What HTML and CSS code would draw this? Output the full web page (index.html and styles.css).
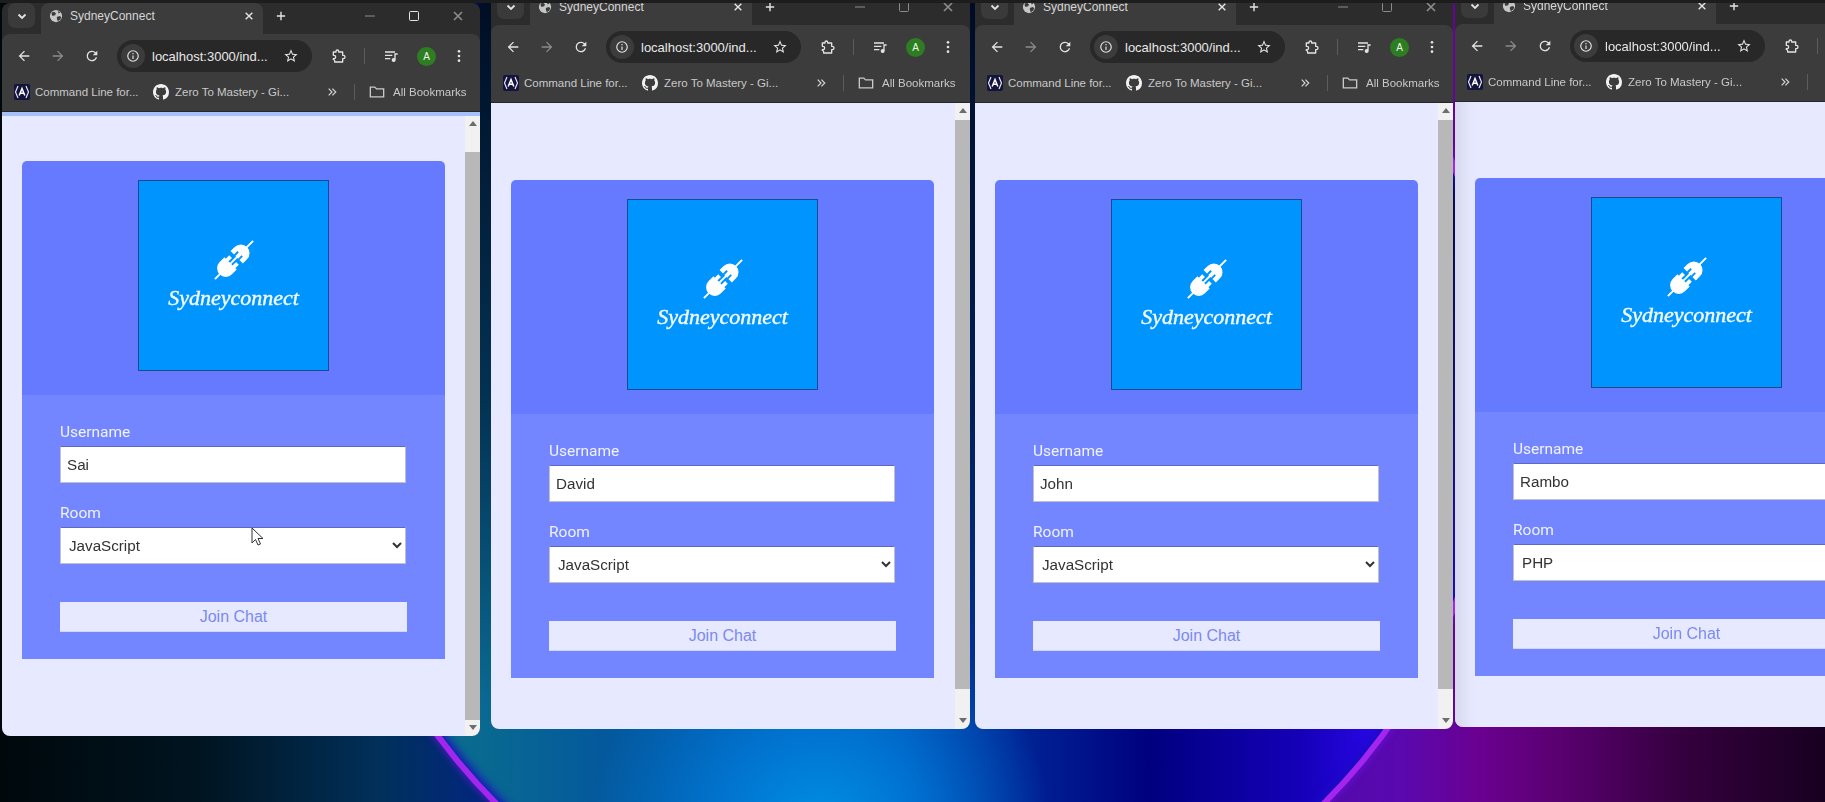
FILE: index.html
```html
<!DOCTYPE html>
<html lang="en">
<head>
    <meta charset="UTF-8">
    <title>SydneyConnect</title>
    <link rel="stylesheet" href="styles.css">
</head>
<body>
    <!-- shared icons -->
    <svg class="sprite" width="0" height="0">
        <symbol id="i-globe" viewBox="0 0 16 16"><circle cx="8" cy="8" r="7" fill="#c4c7c5"/><path d="M3 4l3-1 2 2-1 2-3 1-1-2zM9 9l3-1 2 1-1 3-3 2-1-3zM10 2l3 2-2 1z" fill="#3c3c3c"/></symbol>
        <symbol id="i-down" viewBox="0 0 12 12"><path d="M2.5 4.5L6 8l3.5-3.5" fill="none" stroke="currentColor" stroke-width="1.8"/></symbol>
        <symbol id="i-x" viewBox="0 0 12 12"><path d="M2 2l8 8M10 2l-8 8" fill="none" stroke="currentColor" stroke-width="1.7"/></symbol>
        <symbol id="i-plus" viewBox="0 0 12 12"><path d="M6 1v10M1 6h10" fill="none" stroke="currentColor" stroke-width="1.7"/></symbol>
        <symbol id="i-min" viewBox="0 0 12 12"><path d="M1 6h10" fill="none" stroke="currentColor"/></symbol>
        <symbol id="i-max" viewBox="0 0 12 12"><rect x="1.5" y="1.5" width="9" height="9" rx="1" fill="none" stroke="currentColor"/></symbol>
        <symbol id="i-back" viewBox="0 0 24 24"><path d="M20 11H7.83l5.59-5.59L12 4l-8 8 8 8 1.41-1.41L7.83 13H20z" fill="currentColor"/></symbol>
        <symbol id="i-forward" viewBox="0 0 24 24"><path d="M4 11h12.17l-5.59-5.59L12 4l8 8-8 8-1.41-1.41L16.17 13H4z" fill="currentColor"/></symbol>
        <symbol id="i-reload" viewBox="0 0 24 24"><path d="M17.65 6.35A7.95 7.95 0 0 0 12 4a8 8 0 1 0 7.73 10h-2.08A6 6 0 1 1 12 6c1.66 0 3.14.69 4.22 1.78L13 11h7V4z" fill="currentColor"/></symbol>
        <symbol id="i-info" viewBox="0 0 24 24"><circle cx="12" cy="12" r="9" fill="none" stroke="currentColor" stroke-width="2"/><path d="M12 11v6M12 7v2" stroke="currentColor" stroke-width="2"/></symbol>
        <symbol id="i-star" viewBox="0 0 24 24"><path d="M22 9.24l-7.19-.62L12 2 9.19 8.63 2 9.24l5.46 4.73L5.82 21 12 17.27 18.18 21l-1.63-7.03zM12 15.4l-3.76 2.27 1-4.28-3.32-2.88 4.38-.38L12 6.1l1.71 4.04 4.38.38-3.32 2.88 1 4.28z" fill="currentColor"/></symbol>
        <symbol id="i-ext" viewBox="0 0 24 24"><path d="M5 6h4V5a2 2 0 0 1 4 0v1h6v5h1a2.5 2.5 0 0 1 0 5h-1v5H7v-1.5a2.5 2.5 0 0 0-2-2.3V16h1a2.5 2.5 0 0 0 0-5H5z" fill="none" stroke="currentColor" stroke-width="2" stroke-linejoin="round"/></symbol>
        <symbol id="i-media" viewBox="0 0 24 24"><path d="M3 6h15M3 11h11M3 16h8" stroke="currentColor" stroke-width="2" fill="none"/><path d="M17 8h5v2h-3v8a3 3 0 1 1-2-2.8z" fill="currentColor"/></symbol>
        <symbol id="i-more" viewBox="0 0 24 24"><circle cx="12" cy="5" r="2" fill="currentColor"/><circle cx="12" cy="12" r="2" fill="currentColor"/><circle cx="12" cy="19" r="2" fill="currentColor"/></symbol>
        <symbol id="i-cli" viewBox="0 0 16 16"><rect width="16" height="16" rx="2" fill="#14143a"/><path d="M4 2L1.500 8 4 14M12 2l2.500 6L12 14" fill="none" stroke="#dfe3ff" stroke-width="1.2"/><path d="M5.200 11.500L8 4.500l2.800 7M6.300 9.200h3.400" fill="none" stroke="#fff" stroke-width="1.5"/></symbol>
        <symbol id="i-github" viewBox="0 0 16 16"><path d="M8 0C3.58 0 0 3.58 0 8c0 3.54 2.29 6.53 5.47 7.59.4.07.55-.17.55-.38 0-.19-.01-.82-.01-1.49-2.01.37-2.53-.49-2.69-.94-.09-.23-.48-.94-.82-1.13-.28-.15-.68-.52-.01-.53.63-.01 1.08.58 1.23.82.72 1.21 1.87.87 2.33.66.07-.52.28-.87.51-1.07-1.78-.2-3.64-.89-3.64-3.95 0-.87.31-1.59.82-2.15-.08-.2-.36-1.02.08-2.12 0 0 .67-.21 2.2.82.64-.18 1.32-.27 2-.27s1.36.09 2 .27c1.53-1.04 2.2-.82 2.2-.82.44 1.1.16 1.92.08 2.12.51.56.82 1.27.82 2.15 0 3.07-1.87 3.75-3.65 3.95.29.25.54.73.54 1.48 0 1.07-.01 1.93-.01 2.2 0 .21.15.46.55.38A8.013 8.013 0 0016 8c0-4.42-3.58-8-8-8z" fill="#f2f2f2"/></symbol>
        <symbol id="i-chevrons" viewBox="0 0 12 12"><path d="M2 2l4 4-4 4M6.500 2l4 4-4 4" fill="none" stroke="currentColor" stroke-width="1.5"/></symbol>
        <symbol id="i-folder" viewBox="0 0 18 16"><path d="M1.500 13.500V2.500h5l2 2h8v9z" fill="none" stroke="currentColor" stroke-width="1.5"/></symbol>
        <symbol id="i-plug" viewBox="0 0 60 60">
            <g transform="rotate(-45 30 30)">
                <path d="M2 30h56" stroke="#fff" stroke-width="2"/>
                <path d="M25 21v18h-7a9 9 0 0 1-9-9 9 9 0 0 1 9-9zM25 23h5v4h-5zM25 33h5v4h-5z" fill="#fff"/>
                <path d="M34 21h6a9 9 0 0 1 9 9 9 9 0 0 1-9 9h-6v-5h5v-2h-5v-4h5v-2h-5z" fill="#fff"/>
            </g>
        </symbol>
    </svg>

    <div class="desktop">
        <div class="orb"></div>

        <!-- window 1 -->
        <section class="window window-sai">
            <div class="tabstrip">
                <span class="tab-menu"><svg class="ic-12"><use href="#i-down"/></svg></span>
                <div class="tab">
                    <svg class="ic-14"><use href="#i-globe"/></svg>
                    <span class="tab-title">SydneyConnect</span>
                    <svg class="ic-10"><use href="#i-x"/></svg>
                </div>
                <svg class="ic-10 new-tab"><use href="#i-plus"/></svg>
                <div class="win-controls">
                    <svg class="ic-12 dim"><use href="#i-min"/></svg>
                    <svg class="ic-12"><use href="#i-max"/></svg>
                    <svg class="ic-12 dim"><use href="#i-x"/></svg>
                </div>
            </div>
            <div class="toolbar">
                <svg class="ic-16"><use href="#i-back"/></svg>
                <svg class="ic-16 dim"><use href="#i-forward"/></svg>
                <svg class="ic-16"><use href="#i-reload"/></svg>
                <div class="urlbar">
                    <span class="url-info"><svg class="ic-14"><use href="#i-info"/></svg></span>
                    <span class="url-text">localhost:3000/ind...</span>
                    <svg class="ic-16"><use href="#i-star"/></svg>
                </div>
                <svg class="ic-16"><use href="#i-ext"/></svg>
                <span class="sep"></span>
                <svg class="ic-16"><use href="#i-media"/></svg>
                <span class="avatar">A</span>
                <svg class="ic-16 kebab"><use href="#i-more"/></svg>
            </div>
            <div class="bookmarks">
                <svg class="ic-16"><use href="#i-cli"/></svg>
                <span class="bm-one">Command Line for...</span>
                <svg class="ic-16"><use href="#i-github"/></svg>
                <span class="bm-two">Zero To Mastery - Gi...</span>
                <svg class="ic-10 bm-more"><use href="#i-chevrons"/></svg>
                <span class="sep"></span>
                <svg class="ic-16 bm-folder"><use href="#i-folder"/></svg>
                <span>All Bookmarks</span>
            </div>
            <div class="progress"></div>
            <div class="viewport">
                <div class="page">
                    <div class="card">
                        <div class="card-head">
                            <div class="logo">
                                <svg class="plug"><use href="#i-plug"/></svg>
                                <span class="logo-text">Sydneyconnect</span>
                            </div>
                        </div>
                        <form class="join-form">
                            <label class="field-label">Username</label>
                            <input class="field" type="text" value="Sai">
                            <label class="field-label room-label">Room</label>
                            <select class="field">
                                <option>JavaScript</option>
                                <option>PHP</option>
                            </select>
                            <button class="join-btn" type="button">Join Chat</button>
                        </form>
                    </div>
                </div>
                <div class="scrollbar">
                    <span class="arrow-up"></span>
                    <div class="track"><div class="thumb"></div></div>
                    <span class="arrow-down"></span>
                </div>
            </div>
            <svg class="cursor" width="14" height="20" viewBox="0 0 14 20"><path d="M1 1v15l3.500-3.500L7 18l2.500-1-2.500-5.500h5z" fill="#fff" stroke="#333" stroke-width="1"/></svg>
        </section>

        <!-- window 2 -->
        <section class="window window-david">
            <div class="tabstrip">
                <span class="tab-menu"><svg class="ic-12"><use href="#i-down"/></svg></span>
                <div class="tab">
                    <svg class="ic-14"><use href="#i-globe"/></svg>
                    <span class="tab-title">SydneyConnect</span>
                    <svg class="ic-10"><use href="#i-x"/></svg>
                </div>
                <svg class="ic-10 new-tab"><use href="#i-plus"/></svg>
                <div class="win-controls">
                    <svg class="ic-12 dim"><use href="#i-min"/></svg>
                    <svg class="ic-12 dim"><use href="#i-max"/></svg>
                    <svg class="ic-12 dim"><use href="#i-x"/></svg>
                </div>
            </div>
            <div class="toolbar">
                <svg class="ic-16"><use href="#i-back"/></svg>
                <svg class="ic-16 dim"><use href="#i-forward"/></svg>
                <svg class="ic-16"><use href="#i-reload"/></svg>
                <div class="urlbar">
                    <span class="url-info"><svg class="ic-14"><use href="#i-info"/></svg></span>
                    <span class="url-text">localhost:3000/ind...</span>
                    <svg class="ic-16"><use href="#i-star"/></svg>
                </div>
                <svg class="ic-16"><use href="#i-ext"/></svg>
                <span class="sep"></span>
                <svg class="ic-16"><use href="#i-media"/></svg>
                <span class="avatar">A</span>
                <svg class="ic-16 kebab"><use href="#i-more"/></svg>
            </div>
            <div class="bookmarks">
                <svg class="ic-16"><use href="#i-cli"/></svg>
                <span class="bm-one">Command Line for...</span>
                <svg class="ic-16"><use href="#i-github"/></svg>
                <span class="bm-two">Zero To Mastery - Gi...</span>
                <svg class="ic-10 bm-more"><use href="#i-chevrons"/></svg>
                <span class="sep"></span>
                <svg class="ic-16 bm-folder"><use href="#i-folder"/></svg>
                <span>All Bookmarks</span>
            </div>
            <div class="viewport">
                <div class="page">
                    <div class="card">
                        <div class="card-head">
                            <div class="logo">
                                <svg class="plug"><use href="#i-plug"/></svg>
                                <span class="logo-text">Sydneyconnect</span>
                            </div>
                        </div>
                        <form class="join-form">
                            <label class="field-label">Username</label>
                            <input class="field" type="text" value="David">
                            <label class="field-label room-label">Room</label>
                            <select class="field">
                                <option>JavaScript</option>
                                <option>PHP</option>
                            </select>
                            <button class="join-btn" type="button">Join Chat</button>
                        </form>
                    </div>
                </div>
                <div class="scrollbar">
                    <span class="arrow-up"></span>
                    <div class="track"><div class="thumb"></div></div>
                    <span class="arrow-down"></span>
                </div>
            </div>
        </section>

        <!-- window 3 -->
        <section class="window window-john">
            <div class="tabstrip">
                <span class="tab-menu"><svg class="ic-12"><use href="#i-down"/></svg></span>
                <div class="tab">
                    <svg class="ic-14"><use href="#i-globe"/></svg>
                    <span class="tab-title">SydneyConnect</span>
                    <svg class="ic-10"><use href="#i-x"/></svg>
                </div>
                <svg class="ic-10 new-tab"><use href="#i-plus"/></svg>
                <div class="win-controls">
                    <svg class="ic-12 dim"><use href="#i-min"/></svg>
                    <svg class="ic-12 dim"><use href="#i-max"/></svg>
                    <svg class="ic-12 dim"><use href="#i-x"/></svg>
                </div>
            </div>
            <div class="toolbar">
                <svg class="ic-16"><use href="#i-back"/></svg>
                <svg class="ic-16 dim"><use href="#i-forward"/></svg>
                <svg class="ic-16"><use href="#i-reload"/></svg>
                <div class="urlbar">
                    <span class="url-info"><svg class="ic-14"><use href="#i-info"/></svg></span>
                    <span class="url-text">localhost:3000/ind...</span>
                    <svg class="ic-16"><use href="#i-star"/></svg>
                </div>
                <svg class="ic-16"><use href="#i-ext"/></svg>
                <span class="sep"></span>
                <svg class="ic-16"><use href="#i-media"/></svg>
                <span class="avatar">A</span>
                <svg class="ic-16 kebab"><use href="#i-more"/></svg>
            </div>
            <div class="bookmarks">
                <svg class="ic-16"><use href="#i-cli"/></svg>
                <span class="bm-one">Command Line for...</span>
                <svg class="ic-16"><use href="#i-github"/></svg>
                <span class="bm-two">Zero To Mastery - Gi...</span>
                <svg class="ic-10 bm-more"><use href="#i-chevrons"/></svg>
                <span class="sep"></span>
                <svg class="ic-16 bm-folder"><use href="#i-folder"/></svg>
                <span>All Bookmarks</span>
            </div>
            <div class="viewport">
                <div class="page">
                    <div class="card">
                        <div class="card-head">
                            <div class="logo">
                                <svg class="plug"><use href="#i-plug"/></svg>
                                <span class="logo-text">Sydneyconnect</span>
                            </div>
                        </div>
                        <form class="join-form">
                            <label class="field-label">Username</label>
                            <input class="field" type="text" value="John">
                            <label class="field-label room-label">Room</label>
                            <select class="field">
                                <option>JavaScript</option>
                                <option>PHP</option>
                            </select>
                            <button class="join-btn" type="button">Join Chat</button>
                        </form>
                    </div>
                </div>
                <div class="scrollbar">
                    <span class="arrow-up"></span>
                    <div class="track"><div class="thumb"></div></div>
                    <span class="arrow-down"></span>
                </div>
            </div>
        </section>

        <!-- window 4, runs off the screen -->
        <section class="window window-rambo">
            <div class="tabstrip">
                <span class="tab-menu"><svg class="ic-12"><use href="#i-down"/></svg></span>
                <div class="tab">
                    <svg class="ic-14"><use href="#i-globe"/></svg>
                    <span class="tab-title">SydneyConnect</span>
                    <svg class="ic-10"><use href="#i-x"/></svg>
                </div>
                <svg class="ic-10 new-tab"><use href="#i-plus"/></svg>
            </div>
            <div class="toolbar">
                <svg class="ic-16"><use href="#i-back"/></svg>
                <svg class="ic-16 dim"><use href="#i-forward"/></svg>
                <svg class="ic-16"><use href="#i-reload"/></svg>
                <div class="urlbar">
                    <span class="url-info"><svg class="ic-14"><use href="#i-info"/></svg></span>
                    <span class="url-text">localhost:3000/ind...</span>
                    <svg class="ic-16"><use href="#i-star"/></svg>
                </div>
                <svg class="ic-16"><use href="#i-ext"/></svg>
                <span class="sep"></span>
            </div>
            <div class="bookmarks">
                <svg class="ic-16"><use href="#i-cli"/></svg>
                <span class="bm-one">Command Line for...</span>
                <svg class="ic-16"><use href="#i-github"/></svg>
                <span class="bm-two">Zero To Mastery - Gi...</span>
                <svg class="ic-10 bm-more"><use href="#i-chevrons"/></svg>
                <span class="sep"></span>
            </div>
            <div class="viewport">
                <div class="page">
                    <div class="card">
                        <div class="card-head">
                            <div class="logo">
                                <svg class="plug"><use href="#i-plug"/></svg>
                                <span class="logo-text">Sydneyconnect</span>
                            </div>
                        </div>
                        <form class="join-form">
                            <label class="field-label">Username</label>
                            <input class="field" type="text" value="Rambo">
                            <label class="field-label room-label">Room</label>
                            <select class="field">
                                <option>PHP</option>
                                <option>JavaScript</option>
                            </select>
                            <button class="join-btn" type="button">Join Chat</button>
                        </form>
                    </div>
                </div>
            </div>
        </section>

        <div class="screen-edge"></div>
    </div>
</body>
</html>
```

FILE: styles.css
```css
* {
    box-sizing: border-box;
}
body {
    margin: 0;
    overflow: hidden;
    font-family: "Liberation Sans", Arial, sans-serif;
}
.sprite {
    position: absolute;
}

/* wallpaper */
.desktop {
    position: relative;
    width: 1825px;
    height: 802px;
    overflow: hidden;
    background: linear-gradient(to right, #00080c 0, #001420 200px, #01305a 380px, #01287a 470px, #5a08b0 1400px, #6a0090 1480px, #5a0070 1560px, #35003f 1680px, #180020 1825px);
}
.orb {
    position: absolute;
    left: 326px;
    top: -197px;
    width: 1168px;
    height: 1168px;
    border-radius: 50%;
    background:
        linear-gradient(to bottom, rgba(0, 10, 32, 0.96) 197px, rgba(0, 20, 50, 0.65) 597px, rgba(0, 20, 50, 0) 897px),
        radial-gradient(circle 230px at 494px 1027px, #0090e4 0, rgba(0, 130, 225, 0.7) 45%, rgba(0, 120, 220, 0) 100%),
        linear-gradient(to right, #0b6f8c 114px, #04599c 274px, #0046a8 574px, #00007f 824px, #1500b8 974px, #2a08e8 1054px);
    box-shadow: 0 0 0 6px #a426ee, 0 0 6px 8px rgba(110, 20, 220, 0.6), inset 0 0 10px 3px #1a0cc0;
}
.screen-edge {
    position: absolute;
    left: 0;
    top: 0;
    width: 100%;
    height: 3px;
    background: #1d1d1d;
}

/* browser window */
.window {
    position: absolute;
    width: 479px;
    display: flex;
    flex-direction: column;
    background: #2c2c2c;
    border-radius: 8px;
    overflow: hidden;
    color: #e3e3e3;
    filter: blur(0.4px);
}
.window-sai { left: 2px; top: 3px; width: 478px; height: 733px; }
.window-david { left: 491px; top: -6px; height: 735px; }
.window-john { left: 975px; top: -6px; width: 478px; height: 735px; }
.window-rambo { left: 1455px; top: -7px; height: 734px; }

.ic-10 { width: 10px; height: 10px; flex: none; }
.ic-12 { width: 12px; height: 12px; flex: none; }
.ic-14 { width: 14px; height: 14px; flex: none; }
.ic-16 { width: 16px; height: 16px; flex: none; }
.dim { color: #8b8b8b; }

/* tabs row */
.tabstrip {
    height: 31px;
    display: flex;
    align-items: center;
    padding-left: 6px;
    flex: none;
}
.tab-menu {
    width: 27px;
    height: 25px;
    margin-bottom: 6px;
    display: flex;
    align-items: center;
    justify-content: center;
    background: #3a3a3a;
    border-radius: 7px;
}
.tab {
    width: 222px;
    height: 31px;
    margin-left: 6px;
    padding: 0 9px 6px 8px;
    display: flex;
    align-items: center;
    background: #3c3c3c;
    border-radius: 8px 8px 0 0;
}
.tab-title {
    flex: 1;
    margin-left: 7px;
    font-size: 12px;
    color: #d5d5d5;
}
.new-tab {
    margin: 0 0 6px 13px;
}
.win-controls {
    margin: 0 0 6px auto;
    display: flex;
    gap: 32px;
    padding-right: 16px;
}

/* address bar */
.toolbar {
    height: 44px;
    display: flex;
    align-items: center;
    padding-left: 14px;
    background: #3c3c3c;
    border-radius: 8px 8px 0 0;
    flex: none;
    gap: 18px;
}
.urlbar {
    width: 195px;
    height: 32px;
    margin-left: -1px;
    display: flex;
    align-items: center;
    background: #282828;
    border-radius: 16px;
    padding: 0 13px 0 4px;
}
.url-info {
    width: 24px;
    height: 24px;
    border-radius: 50%;
    background: #3c3c3c;
    display: flex;
    align-items: center;
    justify-content: center;
}
.url-text {
    flex: 1;
    margin-left: 7px;
    font-size: 13px;
    color: #e8e8e8;
    white-space: nowrap;
}
.sep {
    width: 1px;
    height: 16px;
    background: #5c5c5c;
    flex: none;
}
.avatar {
    width: 19px;
    height: 19px;
    border-radius: 50%;
    background: #2e7d22;
    color: #e8f5e6;
    font-size: 10px;
    display: flex;
    align-items: center;
    justify-content: center;
    flex: none;
}
.kebab {
    margin-left: -3px;
}

/* bookmarks row */
.bookmarks {
    height: 34px;
    display: flex;
    align-items: center;
    padding: 0 0 5px 12px;
    background: #3c3c3c;
    border-bottom: 1px solid #26262a;
    flex: none;
    font-size: 11.5px;
    color: #c9c9c9;
    white-space: nowrap;
}
.bm-one {
    width: 118px;
    margin-left: 5px;
}
.bm-two {
    width: 152px;
    margin-left: 6px;
}
.bm-more {
    color: #d0d0d0;
}
.bookmarks .sep {
    margin-left: 17px;
}
.bm-folder {
    margin: 0 8px 0 14px;
}
.progress {
    height: 4px;
    background: #a6c0fa;
    flex: none;
}

/* page area */
.viewport {
    flex: 1;
    min-height: 0;
    display: flex;
    background: #e6e9ff;
}
.page {
    flex: 1;
    min-width: 0;
    padding: 77px 0 0 20px;
}
.window-sai .page { padding-top: 45px; }
.window-rambo .page { padding-top: 76px; }
.window-rambo .viewport {
    box-shadow: inset 20px 0 14px -12px #d6d8ec;
}

.card {
    width: 423px;
    border-radius: 5px 5px 0 0;
    overflow: hidden;
    color: #fff;
}
.card-head {
    background: #667aff;
    padding: 19px 0 24px;
    display: flex;
    justify-content: center;
}
.logo {
    width: 191px;
    height: 191px;
    background: #0094ff;
    border: 1px solid #1c4a8f;
    display: flex;
    flex-direction: column;
    align-items: center;
    padding-top: 50px;
}
.plug {
    width: 58px;
    height: 58px;
    flex: none;
}
.logo-text {
    margin-top: -4px;
    font-family: "Liberation Serif", serif;
    font-style: italic;
    font-size: 22px;
    line-height: 26px;
    color: #f4fbff;
    -webkit-text-stroke: 0.4px #f4fbff;
}

.join-form {
    background: #7386ff;
    padding: 27px 38px;
    display: flex;
    flex-direction: column;
    align-items: flex-start;
}
.field-label {
    height: 20px;
    line-height: 20px;
    margin-bottom: 4px;
    font-family: Roboto, sans-serif;
    font-size: 15.5px;
    color: #f0f2ff;
}
.room-label {
    margin-top: 20px;
}
.field {
    width: 346px;
    height: 37px;
    padding: 0 6px;
    font-family: "Liberation Sans", Arial, sans-serif;
    font-size: 15.2px;
    color: #333;
    background: #fff;
    border: 1px solid #c0c0c8;
    border-top-color: #5d68c4;
    border-radius: 0;
}
select.field {
    padding-left: 4px;
}
.join-btn {
    width: 347px;
    height: 30px;
    margin-top: 38px;
    padding: 0;
    font-family: "Liberation Sans", Arial, sans-serif;
    font-size: 16px;
    color: #7a8af0;
    background: #e6e9ff;
    border: 0;
    border-bottom: 1px solid #d0d6ff;
}

/* scrollbar */
.scrollbar {
    width: 15px;
    flex: none;
    display: flex;
    flex-direction: column;
    align-items: center;
    background: #f1f1f1;
    padding: 5px 0 6px;
}
.arrow-up {
    width: 0;
    height: 0;
    border: 4px solid transparent;
    border-top: 0;
    border-bottom: 5px solid #6d6d6d;
    flex: none;
}
.arrow-down {
    width: 0;
    height: 0;
    border: 4px solid transparent;
    border-bottom: 0;
    border-top: 5px solid #6d6d6d;
    flex: none;
}
.track {
    flex: 1;
    width: 100%;
}
.thumb {
    height: 569px;
    margin-top: 7px;
    background: #b8b8b8;
}
.window-sai .thumb {
    height: 568px;
    margin-top: 26px;
}

.cursor {
    position: absolute;
    left: 249px;
    top: 524px;
}
```
